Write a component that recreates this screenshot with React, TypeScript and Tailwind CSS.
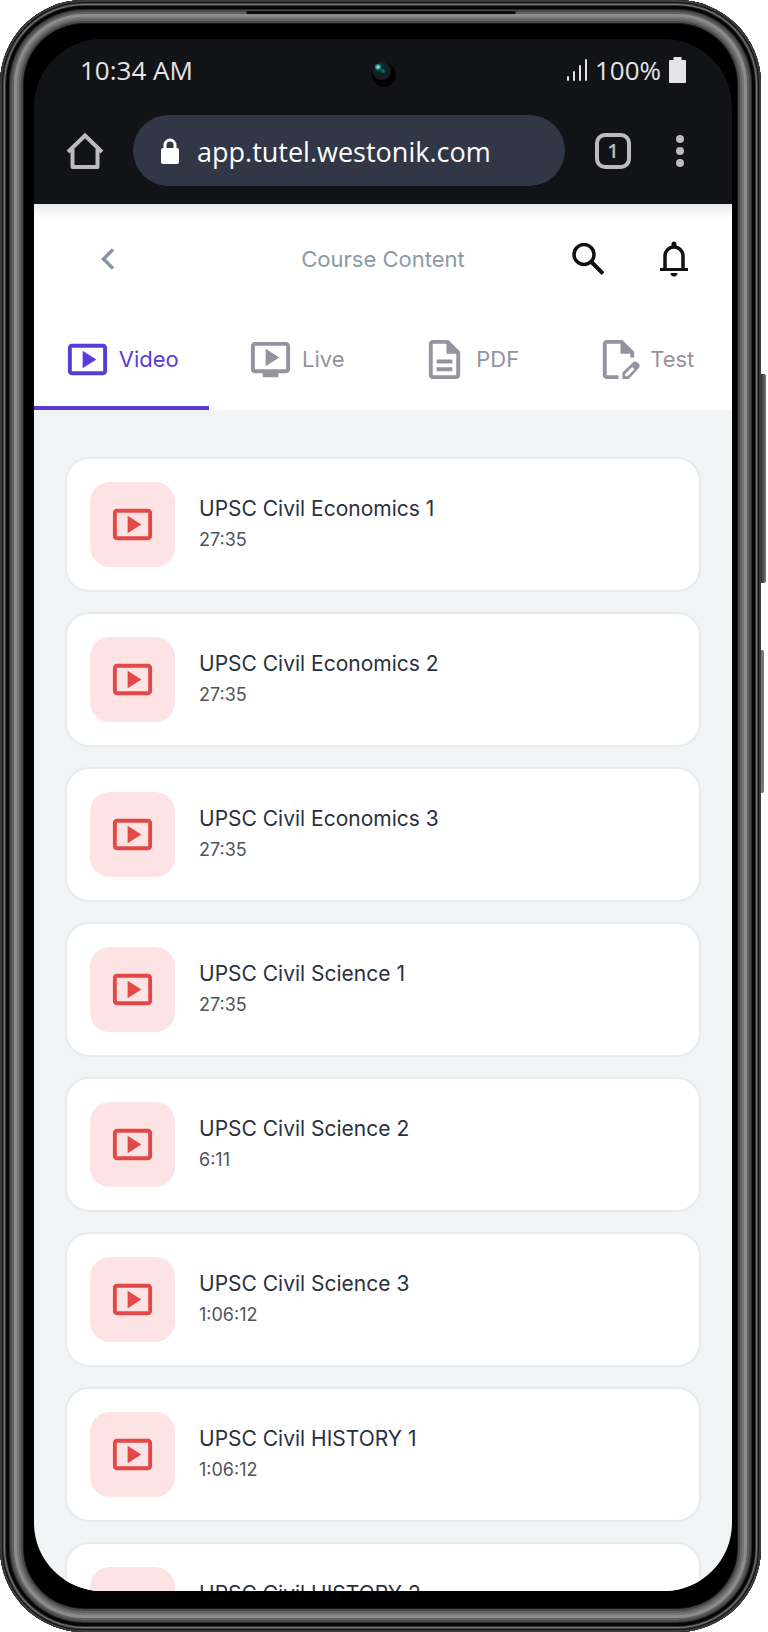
import { useState } from "react";
import type { ReactNode } from "react";
import clsx from "clsx";

type Tab = "Video" | "Live" | "PDF" | "Test";

const LESSONS = [
  { title: "UPSC Civil Economics 1", time: "27:35" },
  { title: "UPSC Civil Economics 2", time: "27:35" },
  { title: "UPSC Civil Economics 3", time: "27:35" },
  { title: "UPSC Civil Science 1", time: "27:35" },
  { title: "UPSC Civil Science 2", time: "6:11" },
  { title: "UPSC Civil Science 3", time: "1:06:12" },
  { title: "UPSC Civil HISTORY 1", time: "1:06:12" },
  { title: "UPSC Civil HISTORY 2", time: "1:06:12" },
];

function Icon({ children }: { children: ReactNode }) {
  return (
    <svg viewBox="0 0 24 24" fill="currentColor" className="size-[47px] shrink-0" aria-hidden="true">
      {children}
    </svg>
  );
}

function VideoIcon() {
  return (
    <Icon>
      <path d="M20 4H4c-1.1 0-2 .9-2 2v12c0 1.1.9 2 2 2h16c1.1 0 2-.9 2-2V6c0-1.1-.9-2-2-2zm0 14H4V6h16v12z" />
      <path d="M9.5 16.5v-9l7 4.5z" />
    </Icon>
  );
}

const TABS: { name: Tab; icon: ReactNode }[] = [
  { name: "Video", icon: <VideoIcon /> },
  {
    name: "Live",
    icon: (
      <Icon>
        <path d="M20 3H4c-1.1 0-2 .9-2 2v12c0 1.1.9 2 2 2h4v2h8v-2h4c1.1 0 2-.9 2-2V5c0-1.1-.9-2-2-2zm0 14H4V5h16v12z" />
        <path d="M9.5 15.5v-9l7 4.5z" />
      </Icon>
    ),
  },
  {
    name: "PDF",
    icon: (
      <Icon>
        <path d="M8 16h8v2H8zm0-4h8v2H8zm6-10H6c-1.1 0-2 .9-2 2v16c0 1.1.9 2 2 2h12c1.1 0 2-.9 2-2V8l-6-6zm4 18H6V4h7v5h5v11z" />
      </Icon>
    ),
  },
  {
    name: "Test",
    icon: (
      <Icon>
        <path d="M14 2H6c-1.1 0-2 .9-2 2v16c0 1.1.9 2 2 2h6v-2H6V4h7v5h5v2h2V8l-6-6z" />
        <path
          fillRule="evenodd"
          d="M14 22v-3.3l5.3-5.2c.7-.7 1.7-.7 2.4 0l.6.6c.7.7.7 1.7 0 2.4L17.2 22H14zm1.4-1.4h1.2l3.6-3.6-1.2-1.2-3.6 3.6v1.2z"
        />
      </Icon>
    ),
  },
];

function StatusBar() {
  return (
    <div className="relative flex h-[76px] items-center justify-between pr-[46px] pb-3.5 pl-[46px] text-[26px] leading-8 text-[#e4e4e6]">
      <span>10:34 AM</span>
      {/* Front camera */}
      <svg viewBox="0 0 26 28" className="absolute top-5 left-1/2 h-7 w-[26px] -translate-x-1/2" aria-hidden="true">
        <defs>
          <radialGradient id="lens" cx="35%" cy="30%" r="60%">
            <stop offset="0" stopColor="#12494a" />
            <stop offset="0.5" stopColor="#0b2428" />
            <stop offset="1" stopColor="#1c1d20" />
          </radialGradient>
        </defs>
        <circle cx="14" cy="16" r="12" fill="#020203" />
        <circle cx="12" cy="12" r="9" fill="url(#lens)" />
        <circle cx="8" cy="8" r="3" fill="#1c8a83" />
        <circle cx="8" cy="8" r="1.5" fill="#9fe8e0" />
        <circle cx="13" cy="12" r="2" fill="#14605f" />
      </svg>
      <span className="flex items-center gap-2">
        <svg viewBox="0 0 20 23" className="h-[23px] w-5" fill="currentColor" aria-hidden="true">
          <rect x="0" y="17" width="2" height="5" rx="1" />
          <rect x="6" y="12" width="2" height="10" rx="1" />
          <rect x="12" y="6" width="2" height="16" rx="1" />
          <rect x="18" y="0" width="2" height="22" rx="1" />
        </svg>
        <span>100%</span>
        <svg viewBox="0 0 17 26" className="h-[26px] w-[17px]" fill="currentColor" aria-hidden="true">
          <path d="M4.5 0h8v3H16a1 1 0 0 1 1 1v21a1 1 0 0 1-1 1H1a1 1 0 0 1-1-1V4a1 1 0 0 1 1-1h3.5z" />
        </svg>
      </span>
    </div>
  );
}

function BrowserBar() {
  return (
    <div className="flex items-center pr-12 pb-[18px] pl-8 text-[#bcbcbe]">
      <button type="button" aria-label="Home" className="mr-[29px]">
        <svg viewBox="0 0 38 38" className="size-[38px]" fill="none" stroke="currentColor" strokeWidth="4" aria-hidden="true">
          <path d="M2 20 19 3.5 36 20" />
          <path d="M6.5 17v18h25V17" strokeLinejoin="round" />
        </svg>
      </button>
      <div className="flex h-[71px] min-w-0 flex-1 items-center gap-[18px] rounded-full bg-[#313746] pr-8 pl-7 text-white">
        <svg viewBox="0 0 18 26" className="h-[26px] w-[18px] shrink-0" aria-hidden="true">
          <rect x="0" y="10" width="18" height="16" rx="2" fill="currentColor" />
          <path d="M4 12V7a5 5 0 0 1 10 0v5" fill="none" stroke="currentColor" strokeWidth="3" />
        </svg>
        <input
          type="text"
          aria-label="Address"
          defaultValue="app.tutel.westonik.com"
          className="h-10 min-w-0 flex-1 bg-transparent pt-1 text-[27px] outline-none"
        />
      </div>
      <button
        type="button"
        aria-label="Open tabs"
        className="ml-[30px] size-9 rounded-[10px] border-4 border-current text-xl leading-7 font-semibold"
      >
        1
      </button>
      <button type="button" aria-label="Menu" className="ml-[45px] flex flex-col gap-1">
        <span className="size-2 rounded-full bg-current" />
        <span className="size-2 rounded-full bg-current" />
        <span className="size-2 rounded-full bg-current" />
      </button>
    </div>
  );
}

function PageHeader() {
  return (
    <div className="grid h-[110px] grid-cols-3 items-center bg-linear-to-b from-[#e9eaeb] to-white to-[14px] px-11">
      <button type="button" aria-label="Back" className="ml-5 justify-self-start text-[#8593a3]">
        <svg viewBox="0 0 20 22" className="h-[22px] w-5" fill="none" stroke="currentColor" strokeWidth="3.5" aria-hidden="true">
          <path d="m15 1.5-9.5 9.5 9.5 9.5" />
        </svg>
      </button>
      <h1 className="justify-self-center text-[22px] leading-8 whitespace-nowrap text-[#8c99a8]">Course Content</h1>
      <div className="flex items-center gap-14 justify-self-end text-[#111]">
        <button type="button" aria-label="Search">
          <svg viewBox="0 0 32 32" className="size-8" fill="none" stroke="currentColor" strokeWidth="3.5" aria-hidden="true">
            <circle cx="12" cy="11.5" r="10" />
            <path d="m19 18.5 12 12" strokeWidth="4" />
          </svg>
        </button>
        <button type="button" aria-label="Notifications">
          <svg viewBox="0 0 28 36" className="h-9 w-7" aria-hidden="true">
            <path d="M0 27h28v3H0z" fill="currentColor" />
            <path d="M5 28V15a9 9 0 0 1 18 0v13" fill="none" stroke="currentColor" strokeWidth="3.5" />
            <path d="M11.5 6V3a2.5 2.5 0 0 1 5 0v3zM10.5 32h7a3.5 3.5 0 0 1-7 0z" fill="currentColor" />
          </svg>
        </button>
      </div>
    </div>
  );
}

export default function App() {
  const [active, setActive] = useState<Tab>("Video");

  return (
    <div className="h-screen bg-white pr-[7px] font-['Open_Sans','Noto_Sans',sans-serif]">
      {/* Phone body, each ring is one band of the metal edge */}
      <div className="relative h-full rounded-[84px] bg-black pt-[39px] pr-[29px] pb-[41px] pl-[34px] shadow-[inset_0_0_0_2px_#3c3c3c,inset_0_0_0_3px_#111,inset_0_0_0_4px_#444,inset_0_0_0_5px_#777,inset_0_0_0_6px_#333,inset_0_0_0_9px_#050505,inset_0_0_0_10px_#2a2a2a,inset_0_0_0_12px_#4a4a4a,inset_0_0_0_14px_#626262,inset_0_0_0_17px_#8c8c8c,inset_0_0_0_19px_#757575,inset_0_0_0_21px_#636363,inset_0_0_0_23px_#484848,inset_0_0_0_24px_#151515]">
        <div className="absolute top-[11px] left-1/2 h-[3px] w-[269px] -translate-x-1/2 bg-[#0c0c0c]" />
        <div className="absolute top-[374px] left-full h-[209px] w-[5px] rounded-r-xs bg-linear-to-r from-[#333] to-[#777]" />
        <div className="absolute top-[650px] left-full h-[143px] w-[3px] rounded-r-xs bg-[#777]" />

        <div className="flex h-full flex-col overflow-hidden rounded-[68px]">
          <div className="bg-[#121317]">
            <StatusBar />
            <BrowserBar />
          </div>

          <div className="flex min-h-0 flex-1 flex-col bg-[#f1f4f5] font-[Inter,sans-serif]">
            <header className="bg-white">
              <PageHeader />
              <nav className="grid grid-cols-4">
                {TABS.map((tab) => (
                  <button
                    key={tab.name}
                    type="button"
                    onClick={() => setActive(tab.name)}
                    className={clsx(
                      "flex h-24 items-center justify-center gap-2 border-b-4 pb-0.5 text-[22px]",
                      active === tab.name ? "border-[#5b3bd0] text-[#5b3bd8]" : "border-transparent text-[#96929f]"
                    )}
                  >
                    {tab.icon}
                    {tab.name}
                  </button>
                ))}
              </nav>
            </header>

            <ul className="flex min-h-0 flex-1 flex-col gap-5 overflow-y-auto px-[31px] pt-[47px] [scrollbar-width:none]">
              {LESSONS.map((lesson) => (
                <li key={lesson.title}>
                  <a href="#" className="flex items-center gap-6 rounded-3xl border-2 border-[#e7eaee] bg-white p-[23px]">
                    <span className="grid size-[85px] place-items-center rounded-[20px] bg-[#fde3e3] text-[#e24848]">
                      <VideoIcon />
                    </span>
                    <span className="flex flex-col pb-0.5">
                      <span className="text-[21px] leading-8 text-[#2b3040]">{lesson.title}</span>
                      <span className="text-lg leading-[30px] text-[#50545c]">{lesson.time}</span>
                    </span>
                  </a>
                </li>
              ))}
            </ul>
          </div>
        </div>
      </div>
    </div>
  );
}
